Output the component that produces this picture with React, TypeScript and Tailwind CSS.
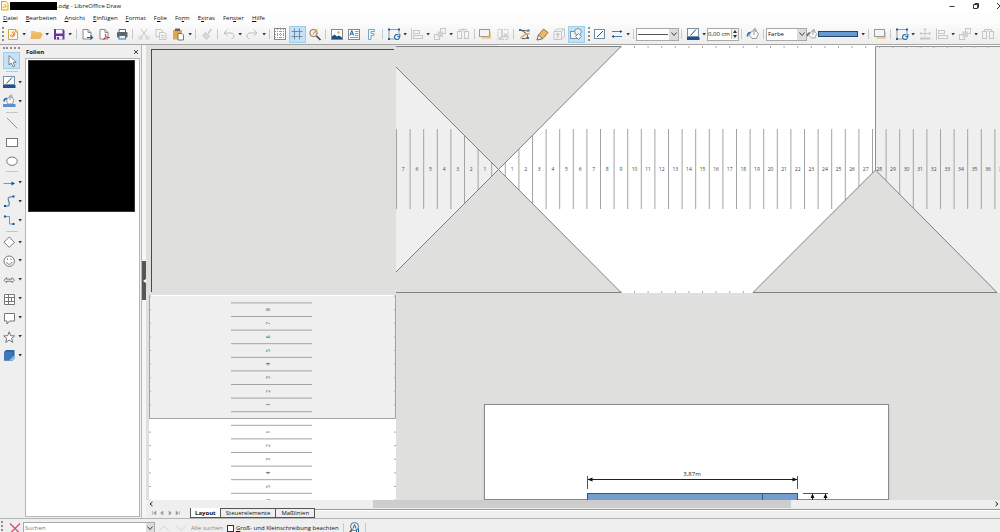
import type { ReactNode } from "react";

const BLUE = "#1f5f99";
const GREY = "#767676";
const PALE = "#c6c6c6";

// All icons are drawn on a 16x16 grid
const icons: Record<string, ReactNode> = {
  doc: (
    <>
      <path d="M3.5 3.5h7l2 2v8h-9z" fill="#fff8e8" stroke="#e0a23c" />
      <path d="M10.5 3v3h2.500" stroke="#e0a23c" />
      <path d="M5.500 10c1-3 2 1 3-1s-2-2-1-3 3 1 2 3-3 2.500-4 1z" stroke="#d8863c" />
    </>
  ),
  open: (
    <>
      <path d="M3 12V5h4l1 1h5v2" fill="#f0c477" />
      <path d="M2 13l2.500-5.500H15L12.500 13z" fill="#e9b765" />
    </>
  ),
  save: (
    <>
      <path d="M3 3h9l1.500 1.500v9H3z" fill="#6e3596" />
      <rect x="5" y="3.500" width="6.500" height="4" fill="#fff" />
      <rect x="5" y="10" width="6.500" height="3.500" fill="#f4ecf9" />
      <rect x="6" y="11" width="2" height="2.500" fill="#6e3596" />
    </>
  ),
  exportDoc: (
    <>
      <path d="M4 3.500h5l3 3v6.500H4z" fill="#fff" stroke="#8a8a8a" />
      <path d="M9 3.500v3h3" stroke="#8a8a8a" />
      <path d="M8 11.500h5.500M11.500 9.500l2 2-2 2" stroke={BLUE} strokeWidth="1.200" />
    </>
  ),
  pdf: (
    <>
      <path d="M4 3.500h5l3 3v6.500H4z" fill="#fff" stroke="#8a8a8a" />
      <path d="M9 3.500v3h3" stroke="#8a8a8a" />
      <path d="M7.500 13.500c2-2 2.500-4 2-5.500-1 2 2 4 4 3.500-2-.5-4 .5-6 2z" stroke="#c8452f" />
    </>
  ),
  print: (
    <>
      <path d="M5 6V3.500h6.500V6" fill="#fff" stroke="#666" />
      <rect x="3" y="6" width="10.500" height="5.500" rx="1" fill="#5f6469" />
      <rect x="5" y="9.500" width="6.500" height="3.500" fill="#e6f0f8" stroke="#3c78ae" />
    </>
  ),
  cut: (
    <>
      <path d="M5 3l5.500 8M11 3L5.500 11" stroke={PALE} />
      <circle cx="4.500" cy="12" r="1.500" stroke={PALE} />
      <circle cx="11.500" cy="12" r="1.500" stroke={PALE} />
    </>
  ),
  copy: (
    <>
      <path d="M3 3.500h5l1.500 1.500v5.500H3z" fill="#f6f6f6" stroke={PALE} />
      <path d="M6.500 6.500h5L13 8v5.500H6.500z" fill="#f6f6f6" stroke={PALE} />
      <path d="M8 9.500h3.500M8 11.500h3.500" stroke={PALE} />
    </>
  ),
  paste: (
    <>
      <rect x="3" y="4" width="9" height="9.500" fill="#e3a64d" />
      <rect x="5" y="2.500" width="5" height="2.500" fill="#666" />
      <path d="M8 7.500h4L13.500 9v5H8z" fill="#fff" stroke="#777" />
    </>
  ),
  brush: (
    <>
      <path d="M12.500 3L9 7.500" stroke={PALE} strokeWidth="1.500" />
      <path d="M6 6.500l4.500 3.500-3 3.500L4 10z" fill="#dadada" stroke={PALE} />
    </>
  ),
  undo: <path d="M6.500 3.500L3 7l3.500 3M3.500 7H10c4 0 4 5.500.5 5.500" stroke="#bcbcbc" />,
  redo: <path d="M9.500 3.500L13 7l-3.500 3M12.500 7H6c-4 0-4 5.500-.5 5.500" stroke="#bcbcbc" />,
  grid: (
    <>
      <rect x="2.500" y="2.500" width="11" height="11" fill="#fff" stroke="#888" />
      <path d="M5.500 3v10.500M8.500 3v10.500M11.500 3v10.500M3 5.500h10.500M3 8.500h10.500M3 11.500h10.500" stroke="#999" strokeDasharray="1 1" />
    </>
  ),
  helplines: <path d="M5.500 2.500v11M10.500 2.500v11M2.500 5.500h11M2.500 10.500h11" stroke="#6d8ca8" />,
  zoom: (
    <>
      <circle cx="6.500" cy="7" r="3.700" fill="#f7ecd2" stroke="#777" />
      <path d="M9.500 10l4 4" stroke="#444" strokeWidth="1.700" />
      <path d="M5.500 9l1-2.500L10 3l1 1-3.500 3.500z" fill="#e3a64d" />
    </>
  ),
  image: (
    <>
      <rect x="2.500" y="3.500" width="11" height="10" fill="#fff" stroke="#888" />
      <path d="M3 13v-2.500l2.500-2 2.500 2L10 9.500l3 2V13z" fill="#1f4f80" />
      <circle cx="9.500" cy="6.500" r="1.200" fill="#e3a64d" />
    </>
  ),
  textbox: (
    <>
      <rect x="2.500" y="3.500" width="11" height="10" fill="#fff" stroke="#888" />
      <path d="M3.800 9.500L5.800 4.500l2 5M4.600 8h2.500" stroke={BLUE} />
      <path d="M9 5.500h3.500M9 7.500h3.500M9 9.500h3.500M4 11.500h8.500" stroke="#999" />
    </>
  ),
  fontwork: <path d="M5.500 3.500h6v2H8V7.500h3v2H8v4H5.500z" fill="#f2f8fc" stroke="#7aa3c2" />,
  transform: (
    <>
      <path d="M9 13H3V3.500h10V8" fill="none" stroke="#999" />
      <path d="M2 2.500h2v2H2zM12 2.500h2v2h-2zM2 12h2v2H2z" fill={BLUE} />
      <path d="M13.500 11a2.500 2.500 0 1 1-1-2M13.800 8v2.500h-2.500" stroke="#2b72ae" strokeWidth="1.200" />
    </>
  ),
  align: (
    <>
      <path d="M2.500 2.500v11.500" stroke={PALE} />
      <rect x="4.500" y="4.500" width="6" height="3" stroke={PALE} />
      <rect x="4.500" y="9.500" width="9" height="3" stroke={PALE} />
    </>
  ),
  arrange: (
    <>
      <rect x="2.500" y="8.500" width="5" height="5" fill="#f3f3f3" stroke={PALE} />
      <rect x="8.500" y="2.500" width="5" height="5" fill="#f3f3f3" stroke={PALE} />
      <rect x="5.500" y="5.500" width="5.500" height="5.500" fill="#d2d2d2" />
    </>
  ),
  distribute: (
    <>
      <path d="M8 2.500v3M4.500 5V3.500h7V5" stroke={PALE} />
      <rect x="2.500" y="5.500" width="4" height="7" stroke={PALE} />
      <rect x="9.500" y="5.500" width="4" height="7" stroke={PALE} />
    </>
  ),
  shadow: (
    <>
      <rect x="4.500" y="5.500" width="9.500" height="7.500" fill="#f0cf95" />
      <rect x="2.500" y="3.500" width="10" height="7" fill="#f4f4f4" stroke="#999" />
    </>
  ),
  crop: (
    <>
      <rect x="3" y="3.500" width="10" height="10" stroke={PALE} strokeDasharray="2 1" />
      <path d="M7 3.500v7h6.500M9 8.500h3M4 12h3" stroke={PALE} strokeWidth="1.500" />
    </>
  ),
  points: (
    <>
      <path d="M3 4l8 1M5 12.500c6 1 6-2 5-4.500L4 4" stroke="#555" />
      <path d="M3.500 12.500C6 9 8 8 12.500 7.500" stroke="#e3a64d" strokeWidth="1.300" />
      <path d="M2 3h2v2H2zM10.500 3.500h2v2h-2zM9.500 11h2.500v2H9.500z" fill="#2d73ad" />
    </>
  ),
  glue: (
    <>
      <path d="M3 14l1.500-5 5-6L14 6.500l-5 6z" fill="#ecb868" stroke="#9a7743" />
      <path d="M3 14l1.500-5 4 3.500z" fill="#f7f7f7" stroke="#777" />
    </>
  ),
  extrude: (
    <>
      <path d="M3 5.500h7.500v8H3zM3 5.500L6 3h7.500v8l-3 2.500M10.500 5.500l3-2.500" stroke={PALE} />
      <path d="M6.700 12V7.500M5 9l1.700-1.700L8.400 9" stroke={PALE} strokeWidth="1.300" />
    </>
  ),
  shapes: (
    <>
      <rect x="2.500" y="5.500" width="7" height="7" fill="#eef4f8" stroke="#7b8f9f" />
      <circle cx="10" cy="5.800" r="3.300" fill="#eef4f8" stroke="#7b8f9f" />
      <path d="M10.500 7.500l3 3-3 3-3-3z" fill="#eef4f8" stroke="#7b8f9f" />
    </>
  ),
  lineDialog: (
    <>
      <rect x="2.500" y="3.500" width="10" height="9" fill="#fff" stroke="#6d8ea8" />
      <path d="M5 11l6-6" stroke="#444" />
    </>
  ),
  arrowStyle: (
    <>
      <path d="M3 5.500h9M4 10.500h9" stroke="#4c7fac" />
      <path d="M11 4l2.500 1.500L11 7zM5 9l-2.500 1.500L5 12z" fill="#1b4f84" />
    </>
  ),
  lineColor: (
    <>
      <rect x="2.500" y="2.500" width="11" height="8" fill="#fff" stroke="#7393ab" />
      <path d="M5.500 9.500l5.500-6" stroke="#444" />
      <rect x="2" y="11" width="12.500" height="3" fill="#1f4f94" />
    </>
  ),
  bucket: (
    <>
      <path d="M5.500 6.500l4-3 4 4-2 5H7l-2.500-3z" fill="#f7f7f7" stroke="#999" />
      <path d="M9 9V3.500c0-1.500 2-1.500 2 0V6" stroke="#999" />
      <path d="M5.500 6.500c-2.500 0-3 1.500-3 4" stroke="#2b66a0" strokeWidth="1.600" />
    </>
  ),
  fillColor: (
    <>
      <path d="M6.500 5l3-1.500 3.500 3L11.500 11H7L5.500 8z" fill="#f7f7f7" stroke="#999" />
      <path d="M9 7V3c0-1.500 2-1.500 2 0v2" stroke="#999" />
      <path d="M6 5.500c-2.500 0-3 1-3 3" stroke="#2b66a0" strokeWidth="1.600" />
      <rect x="2" y="11" width="12.500" height="3" fill="#5f8fc9" />
    </>
  ),
  position: (
    <>
      <path d="M8 2.500v8M3 7.500h10.500M6.500 4L8 2.500 9.500 4M4.500 6L3 7.500 4.500 9M12 6l1.500 1.500L12 9" stroke={PALE} />
      <path d="M3 12.500h10.500" stroke={PALE} strokeWidth="2" />
    </>
  ),
  pointer: <path d="M5 2.500v9.500l2.300-2 1.700 3.800 1.800-.8L9.200 9.300h3z" fill="#fff" stroke="#76818a" />,
  line: <path d="M3 3l10.500 10.500" stroke="#7b98b0" />,
  rect: <rect x="2.500" y="4.500" width="11" height="8" fill="#fff" stroke={GREY} />,
  ellipse: <ellipse cx="8" cy="8.200" rx="5.200" ry="4.200" fill="#fff" stroke={GREY} />,
  arrow: (
    <>
      <path d="M2.500 8.500h9" stroke="#6f9ac0" />
      <path d="M10.500 6.500l3.500 2-3.500 2z" fill="#1b4f84" />
    </>
  ),
  curve: (
    <>
      <path d="M4 13c4 .5 5-1 4-4S5.500 4 12 3.500" stroke="#4c7fac" strokeWidth="1.200" />
      <path d="M3 12h2v2H3zM11.500 2.500h2v2h-2z" fill="#1b4f84" />
    </>
  ),
  connector: (
    <>
      <path d="M4 4.500h4.500V12H12" stroke="#6f9ac0" />
      <path d="M3 3.500h2v2H3zM11.500 11h2v2h-2z" fill="#1b4f84" />
    </>
  ),
  diamond: <path d="M8.200 3l5.200 5.200-5.200 5.200L3 8.200z" fill="#fff" stroke={GREY} />,
  smiley: (
    <>
      <circle cx="8.200" cy="8.200" r="5.200" fill="#fff" stroke={GREY} />
      <path d="M5.500 9c.5 3 5 3 5.500 0M6.500 5.500v1.500M10 5.500v1.500" stroke={GREY} />
    </>
  ),
  doubleArrow: <path d="M3 8.200L5.500 5.700v1.500h5.500V5.700l2.500 2.500-2.500 2.500V9.200H5.500v1.500z" fill="#fff" stroke={GREY} />,
  table: <path d="M3.500 3.500h10v10h-10zM7.500 3.500v10M3.500 6.500h10M7.500 10.500h6M3.500 10.500h4M10.500 6.500v4" fill="#fff" stroke={GREY} />,
  callout: <path d="M3.500 3.500h10v7.500H8.500L6 14v-3H3.500z" fill="#fff" stroke={GREY} />,
  star: <path d="M8.200 2.800l1.500 3.900 4 .2-3.100 2.500 1.100 4-3.500-2.300-3.500 2.300 1.100-4-3.100-2.500 4-.2z" fill="#fff" stroke={GREY} />,
  cube: (
    <>
      <path d="M3 5l2-2h8.500v8.500l-2 2H3z" fill="#2d67a5" />
      <path d="M3 5h8.500v8.500H3z" fill="#3d79b8" />
      <path d="M8 13.500L13.500 8v3.500l-2 2z" fill="#8fbce6" />
    </>
  ),
  findClose: <path d="M3 3.500l10 10M13 3.500l-10 10" stroke="#d8505f" strokeWidth="1.300" />,
  findUp: <path d="M3 11l5-5 5 5" stroke="#d4d4d4" />,
  findDown: <path d="M3 5.500l5 5 5-5" stroke="#d4d4d4" />,
  findReplace: (
    <>
      <circle cx="8.500" cy="6.500" r="4" fill="#eef4f9" stroke="#666" />
      <path d="M6 9.500L2.500 14" stroke="#555" strokeWidth="1.700" />
      <path d="M7 8.500l1.500-4 1.500 4M12.500 8.500v5.500M10.500 10v4" stroke={BLUE} />
    </>
  ),
};

const Icon = ({ name }: { name: string }) => (
  <svg viewBox="0 0 16 16" className="h-4 w-4 shrink-0" fill="none" aria-hidden="true">
    {icons[name]}
  </svg>
);

const Tool = ({ name, label, active }: { name: string; label: string; active?: boolean }) => (
  <button
    aria-label={label}
    className={`flex h-[17px] w-[17px] shrink-0 items-center justify-center ${active ? "border border-[#9fcdec] bg-[#c5e1f5]" : ""}`}
  >
    <Icon name={name} />
  </button>
);

const Caret = ({ label }: { label: string }) => (
  <button aria-label={label} className="flex h-[17px] w-[6px] shrink-0 items-center justify-center">
    <svg viewBox="0 0 4 3" className="h-[3px] w-1" aria-hidden="true">
      <path d="M.5 0h3.500L2 2.500z" fill="#333" />
    </svg>
  </button>
);

const Sep = () => (
  <div className="flex w-[5px] shrink-0 justify-center">
    <div className="h-[10px] w-px bg-[#c8c8c8]" />
  </div>
);

const Handle = () => <div className="h-[14px] w-0 shrink-0 border-l-2 border-dotted border-[#8f8f8f]" />;

const Chevron = () => (
  <svg viewBox="0 0 8 8" className="h-2 w-2" fill="none" aria-hidden="true">
    <path d="M1.500 2.500L4 5.500l2.500-3" stroke="#444" />
  </svg>
);

type Item = [name: string, label: string, caret?: boolean, active?: boolean] | "sep";

const standardBar: Item[] = [
  ["doc", "Neu", true],
  ["open", "Öffnen", true],
  ["save", "Speichern", true],
  "sep",
  ["exportDoc", "Exportieren"],
  ["pdf", "Als PDF exportieren"],
  ["print", "Drucken"],
  "sep",
  ["cut", "Ausschneiden"],
  ["copy", "Kopieren"],
  ["paste", "Einfügen", true],
  "sep",
  ["brush", "Format übertragen"],
  "sep",
  ["undo", "Rückgängig", true],
  ["redo", "Wiederherstellen", true],
  "sep",
  ["grid", "Raster"],
  ["helplines", "Hilfslinien", false, true],
  ["zoom", "Zoom"],
  "sep",
  ["image", "Bild"],
  ["textbox", "Textfeld"],
  ["fontwork", "Fontwork"],
  "sep",
  ["transform", "Transformationen", true],
  ["align", "Ausrichten", true],
  ["arrange", "Anordnen", true],
  ["distribute", "Verteilen"],
  "sep",
  ["shadow", "Schatten"],
  ["crop", "Zuschneiden"],
  "sep",
  ["points", "Punkte bearbeiten"],
  ["glue", "Klebepunkte"],
  ["extrude", "Extrusion"],
  ["shapes", "Zeichenfunktionen", false, true],
];

const positionBar: Item[] = [
  ["shadow", "Schatten"],
  "sep",
  ["transform", "Transformationen", true],
  ["position", "Position"],
  ["align", "Ausrichten", true],
  ["arrange", "Anordnen", true],
  ["distribute", "Verteilen"],
];

const drawBar: Item[] = [
  ["pointer", "Auswählen", false, true],
  "sep",
  ["lineColor", "Linienfarbe", true],
  ["fillColor", "Füllfarbe", true],
  "sep",
  ["line", "Linie"],
  ["rect", "Rechteck"],
  ["ellipse", "Ellipse"],
  "sep",
  ["arrow", "Linien und Pfeile", true],
  ["curve", "Kurven", true],
  ["connector", "Verbinder", true],
  "sep",
  ["diamond", "Standardformen", true],
  ["smiley", "Symbolformen", true],
  ["doubleArrow", "Blockpfeile", true],
  ["table", "Flussdiagramm", true],
  ["callout", "Legenden", true],
  ["star", "Sterne", true],
  ["cube", "3D-Objekte", true],
];

const renderItems = (items: Item[]) =>
  items.map((item, i) =>
    item === "sep" ? (
      <Sep key={i} />
    ) : (
      <div key={i} className="flex shrink-0">
        <Tool name={item[0]} label={item[1]} active={item[3]} />
        {item[2] && <Caret label={`${item[1]}: Optionen`} />}
      </div>
    )
  );

const TitleBar = () => (
  <header className="flex h-3 shrink-0 items-center overflow-hidden bg-white">
    <svg viewBox="0 0 10 12" className="h-3 w-[10px]" fill="none" aria-hidden="true">
      <path d="M1.500 1.500h4.500l2 2v6.500H1.500z" fill="#fff6d8" stroke="#d9a521" />
      <path d="M3 8c1-3 2 0 3-1s-2-2-1-3" stroke="#d9a521" />
    </svg>
    <div className="h-2 w-[47px] bg-black" />
    <h1>.odg - LibreOffice Draw</h1>
    <div className="-mr-3 ml-auto flex">
      <button aria-label="Minimieren" className="flex h-3 w-6 items-center justify-center">
        <svg viewBox="0 0 8 8" className="h-2 w-2" fill="none"><path d="M1.500 4.500h5" stroke="#333" /></svg>
      </button>
      <button aria-label="Verkleinern" className="flex h-3 w-6 items-center justify-center">
        <svg viewBox="0 0 8 8" className="h-2 w-2" fill="none">
          <path d="M1.500 2.500h4v4h-4zM3 2V1.500h3.500v4H6" stroke="#333" />
        </svg>
      </button>
      <button aria-label="Schließen" className="flex h-3 w-6 items-center justify-center">
        <svg viewBox="0 0 8 8" className="h-2 w-2" fill="none"><path d="M1 1l6 6M7 1L1 7" stroke="#333" /></svg>
      </button>
    </div>
  </header>
);

// Menu entries are split around the underlined access key
const menus = [
  ["", "D", "atei"],
  ["", "B", "earbeiten"],
  ["", "A", "nsicht"],
  ["", "E", "infügen"],
  ["", "F", "ormat"],
  ["F", "o", "lie"],
  ["Fo", "r", "m"],
  ["E", "x", "tras"],
  ["Fen", "s", "ter"],
  ["", "H", "ilfe"],
];

const MenuBar = () => (
  <nav className="flex h-3 shrink-0 items-center gap-2 bg-[#fdfdfd] pl-[3px]">
    {menus.map(([pre, key, post]) => (
      <button key={pre + key + post}>
        {pre}
        <span className="underline">{key}</span>
        {post}
      </button>
    ))}
  </nav>
);

const ToolBars = () => (
  <div className="flex h-[21px] shrink-0 items-center overflow-hidden border-b border-[#a5a5a5] bg-linear-to-b from-[#fbfbfb] to-[#ededed]">
    <div className="flex w-[585px] shrink-0 items-center justify-between pl-[2px]">
      <Handle />
      {renderItems(standardBar)}
    </div>
    <div className="flex shrink-0 items-center pl-[3px]">
      <Handle />
      <div className="w-px" />
      <Tool name="lineDialog" label="Linie" />
      <Tool name="arrowStyle" label="Linienenden" />
      <Caret label="Linienenden: Optionen" />
      <Sep />
      <div className="relative flex">
        <select aria-label="Linienstil" className="h-[13px] w-[43px] appearance-none border border-[#a9a9a9] bg-white">
          <option aria-label="Durchgehend"></option>
        </select>
        <div className="pointer-events-none absolute inset-y-px left-[2px] right-px flex items-center justify-between">
          <div className="h-px w-[30px] bg-[#555]" />
          <div className="flex h-full w-[9px] items-center justify-center bg-[#dcdcdc]"><Chevron /></div>
        </div>
      </div>
      <Sep />
      <Tool name="lineColor" label="Linienfarbe" />
      <Caret label="Linienfarbe: Optionen" />
      <div className="flex h-[13px] w-[32px] items-center border border-[#a9a9a9] bg-white">
        <input aria-label="Linienbreite" defaultValue="0,00 cm" className="min-w-0 flex-1 outline-none" />
        <div className="flex flex-col border-l border-[#bbb] bg-[#efefef]">
          <button aria-label="Breiter" className="flex h-[5px] w-[6px] items-center justify-center">
            <svg viewBox="0 0 4 3" className="h-[3px] w-1"><path d="M0 3h4L2 0z" fill="#333" /></svg>
          </button>
          <button aria-label="Schmaler" className="flex h-[5px] w-[6px] items-center justify-center">
            <svg viewBox="0 0 4 3" className="h-[3px] w-1"><path d="M0 0h4L2 3z" fill="#333" /></svg>
          </button>
        </div>
      </div>
      <Sep />
      <Tool name="bucket" label="Fläche" />
      <Sep />
      <div className="relative flex">
        <select aria-label="Füllart" className="h-[13px] w-[41px] appearance-none border border-[#a9a9a9] bg-white pl-px">
          <option>Farbe</option>
        </select>
        <div className="pointer-events-none absolute inset-y-px right-px flex w-[9px] items-center justify-center bg-[#dcdcdc]">
          <Chevron />
        </div>
      </div>
      <button aria-label="Füllfarbe" className="flex h-[17px] w-[53px] items-center">
        <svg viewBox="2 2 13 13" className="h-[11px] w-[11px]" fill="none">{icons.bucket}</svg>
        <div className="h-[6px] w-10 border border-[#24476f] bg-[#6799d3]" />
      </button>
      <Caret label="Füllfarbe: Optionen" />
      <Sep />
      {renderItems(positionBar)}
    </div>
  </div>
);

const DrawBar = () => (
  <div className="w-[25px] shrink-0 bg-[#efefef] pt-[2px]">
    <div className="ml-[3px] h-0 w-[17px] border-t-2 border-dotted border-[#8f8f8f]" />
    <div className="mt-[3px] flex h-[312px] flex-col justify-between">
      {drawBar.map((item, i) =>
        item === "sep" ? (
          <div key={i} className="ml-[6px] h-px w-3 bg-[#c4c4c4]" />
        ) : (
          <div key={i} className={item[2] ? "flex items-center" : "flex items-center pl-[3px]"}>
            <Tool name={item[0]} label={item[1]} active={item[3]} />
            {item[2] && <Caret label={`${item[1]}: Optionen`} />}
          </div>
        )
      )}
    </div>
  </div>
);

const SlidesPanel = () => (
  <aside className="flex w-[117px] shrink-0 flex-col border-r border-[#b5b5b5] bg-[#efefef] pb-px pr-px">
    <div className="flex h-[13px] shrink-0 items-center justify-between pl-px pr-px">
      <h2 className="font-bold">Folien</h2>
      <button aria-label="Folienbereich schließen">
        <svg viewBox="0 0 6 6" className="h-[6px] w-[6px]" fill="none"><path d="M1 1l4 4M5 1L1 5" stroke="#444" /></svg>
      </button>
    </div>
    <div className="min-h-0 flex-1 border border-[#b5b5b5] bg-white pl-[2px] pt-px">
      <button aria-label="Folie 1" className="block h-[152px] w-[107px] border border-[#333] bg-black" />
    </div>
  </aside>
);

const Splitter = () => (
  <div className="flex w-1 shrink-0 flex-col bg-[#f6f6f6] pt-[216px]">
    <button aria-label="Bereich ausblenden" className="flex h-[39px] w-1 items-center justify-center bg-[#555]">
      <svg viewBox="0 0 3 4" className="h-1 w-[3px]"><path d="M3 0v4L0 2z" fill="#fff" /></svg>
    </button>
  </div>
);

const UNIT = 13.6;

const range = (from: number, to: number) => Array.from({ length: to - from + 1 }, (_, i) => from + i);

const HorizontalRuler = () => {
  const zero = 102.5;
  return (
    <svg className="h-full w-full bg-white" fill="none" aria-label="Horizontales Lineal">
      <rect width="102" height="249" fill="#efefef" />
      <rect x="480" y="2" width="3000" height="247" fill="#efefef" />
      <path d="M479.500 249V1.500H3480" stroke="#8f8f8f" />
      {range(-8, 160).map((n) => (
        <path key={n} d={`M${zero + UNIT * (n + 0.5)} 84v80`} stroke="#a3a3a3" />
      ))}
      {range(9, 160).map((n) => (
        <path key={n} d={`M${zero + UNIT * n} 1v2M${zero + UNIT * n} 246v2`} stroke="#aaa" />
      ))}
      <g fill="#444" className="text-[5px]" textAnchor="middle">
        {range(-7, 37)
          .filter((n) => n !== 0)
          .map((n) => (
            <text key={n} x={zero + UNIT * n} y="126">
              {Math.abs(n)}
            </text>
          ))}
      </g>
      <g fill="#dfdfdd" stroke="#808080">
        <path d="M-1 1.500H225L102.500 124.500L-1 21z" />
        <path d="M-1 247.500H225L102.500 124.500L-1 228z" />
        <path d="M357 247.500H601L479.500 125z" />
      </g>
      <path d="M0 248.500h3480" stroke="#dfdfdd" />
    </svg>
  );
};

const VerticalRuler = () => {
  const zero = 124.5;
  return (
    <svg className="h-full w-full bg-[#dfdfdd]" fill="none" aria-label="Vertikales Lineal">
      <rect x="3" width="247" height="124" y="1" fill="#efefef" />
      <rect x="3" y="125" width="247" height="2000" fill="#fff" />
      <path d="M3.500 1v123.500h246V1" stroke="#a3a3a3" />
      <path d="M4 1.500h245" stroke="#fff" />
      {range(-9, 100).map((n) => (
        <path key={n} d={`M85 ${zero + UNIT * (n + 0.5)}h81`} stroke="#a3a3a3" />
      ))}
      {range(-9, 100).map((n) => (
        <path key={n} d={`M3 ${zero + UNIT * n}h2M248 ${zero + UNIT * n}h2`} stroke="#aaa" />
      ))}
      <g fill="#444" className="text-[5px]" textAnchor="middle">
        {range(-8, 6)
          .filter((n) => n !== 0)
          .map((n) => (
            <text key={n} transform={`translate(124 ${zero + UNIT * n}) rotate(-90)`}>
              {Math.abs(n)}
            </text>
          ))}
      </g>
    </svg>
  );
};

const Workspace = () => (
  <div className="overflow-hidden bg-[#dfdfdd] pl-[88px] pt-[110px]">
    <div className="h-full w-[405px] border border-[#8a8a8a] bg-white shadow-sm">
      <svg className="h-full w-full overflow-visible" fill="none" aria-label="Zeichnung">
        <text x="207" y="71" fill="#222" textAnchor="middle" className="text-[6px]">
          3,87m
        </text>
        <path d="M102.500 71v13M312.500 71v13" stroke="#555" />
        <path d="M103 74.500h209" stroke="#222" />
        <path d="M102.500 74.500l5-2v4zM312.500 74.500l-5-2v4z" fill="#111" />
        <rect x="102.500" y="88.500" width="210" height="40" fill="#729fcf" stroke="#2f5688" />
        <path d="M277.500 89v39" stroke="#2f5688" />
        <path d="M318 88.500h25" stroke="#555" />
        <path d="M327.500 89v40M340.500 89v40" stroke="#222" />
        <path d="M327.500 88.500l-2 4.500h4zM340.500 88.500l-2 4.500h4z" fill="#111" />
      </svg>
    </div>
  </div>
);

const tabs = ["Layout", "Steuerelemente", "Maßlinien"];

const tabArrows = ["M1.500 1v4M5 1L2.500 3 5 5z", "M4 1L1.500 3 4 5z", "M2 1l2.500 2L2 5z", "M4.500 1v4M1 1l2.500 2L1 5z"];

const Editor = () => (
  <main className="flex min-w-0 flex-1 flex-col bg-[#efefef]">
    <div className="grid min-h-0 flex-1 grid-cols-[250px_minmax(0,1fr)] grid-rows-[249px_minmax(0,1fr)]">
      <div className="bg-[#dfdfdd] pb-[2px] pl-[5px] pr-[2px] pt-1">
        <div className="h-full border-l border-t border-[#4a4a4a]" />
      </div>
      <HorizontalRuler />
      <VerticalRuler />
      <Workspace />
    </div>
    <div className="flex h-2 shrink-0 items-center justify-between bg-[#efefef]">
      <button aria-label="Nach links" className="flex w-[9px] justify-center">
        <svg viewBox="0 0 4 6" className="h-[6px] w-1" fill="none"><path d="M3.500 1L1 3l2.500 2" stroke="#222" /></svg>
      </button>
      <div className="flex-218" />
      <div className="h-full flex-417 bg-[#cdcdcd]" />
      <div className="flex-202" />
      <button aria-label="Nach rechts" className="flex w-[7px] justify-center">
        <svg viewBox="0 0 4 6" className="h-[6px] w-1" fill="none"><path d="M.5 1L3 3 .5 5" stroke="#222" /></svg>
      </button>
    </div>
    <div className="flex h-[10px] shrink-0 items-start pl-1">
      <div className="flex h-full items-center">
        {tabArrows.map((d, i) => (
          <button key={d} aria-label={["Erste Ebene", "Vorige Ebene", "Nächste Ebene", "Letzte Ebene"][i]} className="flex w-2 justify-center">
            <svg viewBox="0 0 6 6" className="h-[6px] w-[6px]" fill="#999"><path d={d} stroke="#999" strokeWidth="0.500" /></svg>
          </button>
        ))}
      </div>
      <div className="ml-2 flex h-[10px]" role="tablist">
        {tabs.map((tab, i) => (
          <button
            key={tab}
            role="tab"
            aria-selected={i === 0}
            className={`flex h-full items-center border-b border-r border-[#555] ${i === 0 ? "border-l bg-white px-1 font-bold" : "border-t bg-[#efefef] px-[5px]"}`}
          >
            {tab}
          </button>
        ))}
      </div>
      <div className="mt-px h-[2px] flex-1 border-t border-[#999] bg-white" />
    </div>
  </main>
);

const FindBar = () => (
  <div className="h-[14px] shrink-0 overflow-hidden border-t border-[#b5b5b5] bg-[#efefef]">
    <div className="flex h-[18px] items-center pl-px">
      <Handle />
      <div className="w-[3px]" />
      <Tool name="findClose" label="Suchleiste schließen" />
      <div className="flex h-3 w-[132px] border border-[#a9a9a9] bg-white">
        <input aria-label="Suchen" placeholder="Suchen" className="min-w-0 flex-1 pl-px outline-none placeholder:text-[#777]" />
        <button aria-label="Verlauf" className="flex w-2 items-center justify-center bg-[#dcdcdc]"><Chevron /></button>
      </div>
      <Tool name="findUp" label="Vorheriges" />
      <Tool name="findDown" label="Nächstes" />
      <button className="pl-[2px] text-[#888]">Alle suchen</button>
      <label className="flex items-center gap-[2px] pl-1">
        <input type="checkbox" className="h-[7px] w-[7px] appearance-none border border-[#333] bg-white checked:bg-[#333]" />
        <span>
          <span className="underline">G</span>roß- und Kleinschreibung beachten
        </span>
      </label>
      <div className="w-[2px]" />
      <Sep />
      <Tool name="findReplace" label="Suchen und Ersetzen" />
      <Sep />
    </div>
  </div>
);

const App = () => (
  <div className="flex h-screen flex-col overflow-hidden bg-[#efefef] font-['Open_Sans','Noto_Sans',sans-serif] text-[6px] leading-[10px] text-[#111]">
    <TitleBar />
    <MenuBar />
    <ToolBars />
    <div className="flex min-h-0 flex-1">
      <DrawBar />
      <SlidesPanel />
      <Splitter />
      <Editor />
    </div>
    <FindBar />
  </div>
);

export default App;
